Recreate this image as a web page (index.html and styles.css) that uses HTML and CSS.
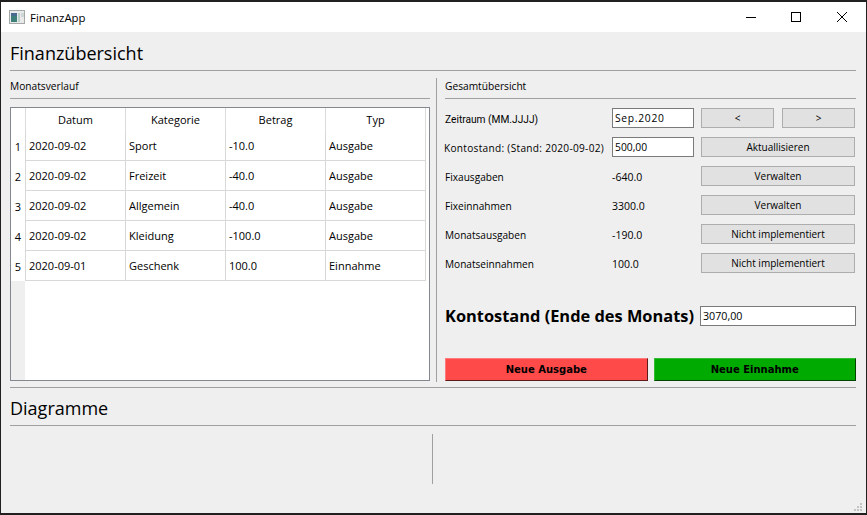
FILE: index.html
```html
<!DOCTYPE html>
<html lang="de">
<head>
<meta charset="utf-8">
<title>FinanzApp</title>
<link rel="stylesheet" href="styles.css">
</head>
<body>
<div class="window">
  <header class="titlebar">
    <svg class="appicon" width="16" height="14" viewBox="0 0 16 14">
      <rect x="0.5" y="0.5" width="15" height="13" fill="#e8eaea" stroke="#a6a8a8"/>
      <rect x="2" y="3" width="6" height="9" fill="#3f7f7a"/>
      <rect x="2" y="3" width="6" height="3" fill="#4a6a92"/>
      <rect x="9" y="3" width="2" height="9" fill="#bcd0cc"/>
      <rect x="12" y="3" width="3" height="4" fill="#cfd6d6"/>
    </svg>
    <span class="apptitle">FinanzApp</span>
    <div class="winbtns">
      <span class="winbtn minbtn"><svg width="10" height="10" viewBox="0 0 10 10"><path d="M0 5.5H10" stroke="#000" fill="none"/></svg></span>
      <span class="winbtn"><svg width="10" height="10" viewBox="0 0 10 10"><rect x="0.5" y="0.5" width="9" height="9" stroke="#000" fill="none"/></svg></span>
      <span class="winbtn"><svg width="10" height="10" viewBox="0 0 10 10"><path d="M0 0L10 10M10 0L0 10" stroke="#000" fill="none"/></svg></span>
    </div>
  </header>
  <main class="content">
    <h1 class="heading">Finanzübersicht</h1>
    <div class="columns">
      <section class="left">
        <h2 class="subheading">Monatsverlauf</h2>
        <div class="tablebox">
          <table class="grid">
            <thead>
              <tr><th class="corner"></th><th>Datum</th><th>Kategorie</th><th>Betrag</th><th>Typ</th></tr>
            </thead>
            <tbody>
              <tr><th class="rownum">1</th><td>2020-09-02</td><td>Sport</td><td>-10.0</td><td>Ausgabe</td></tr>
              <tr><th class="rownum">2</th><td>2020-09-02</td><td>Freizeit</td><td>-40.0</td><td>Ausgabe</td></tr>
              <tr><th class="rownum">3</th><td>2020-09-02</td><td>Allgemein</td><td>-40.0</td><td>Ausgabe</td></tr>
              <tr><th class="rownum">4</th><td>2020-09-02</td><td>Kleidung</td><td>-100.0</td><td>Ausgabe</td></tr>
              <tr><th class="rownum">5</th><td>2020-09-01</td><td>Geschenk</td><td>100.0</td><td>Einnahme</td></tr>
            </tbody>
          </table>
        </div>
      </section>
      <section class="right">
        <h2 class="subheading">Gesamtübersicht</h2>
        <div class="form">
          <span class="lbl zeit">Zeitraum (MM.JJJJ)</span>
          <input class="field spaced" value="Sep.2020">
          <div class="pair"><button class="btn">&lt;</button><button class="btn">&gt;</button></div>

          <span class="lbl wide">Kontostand: (Stand: 2020-09-02)</span>
          <input class="field" value="500,00">
          <button class="btn">Aktuallisieren</button>

          <span class="lbl">Fixausgaben</span>
          <span class="lbl val">-640.0</span>
          <button class="btn">Verwalten</button>

          <span class="lbl">Fixeinnahmen</span>
          <span class="lbl val">3300.0</span>
          <button class="btn">Verwalten</button>

          <span class="lbl">Monatsausgaben</span>
          <span class="lbl val">-190.0</span>
          <button class="btn">Nicht implementiert</button>

          <span class="lbl">Monatseinnahmen</span>
          <span class="lbl val">100.0</span>
          <button class="btn">Nicht implementiert</button>
        </div>
        <div class="balance">
          <span class="balance-label">Kontostand (Ende des Monats)</span>
          <input class="field balance-field" value="3070,00">
        </div>
        <div class="actions">
          <button class="action red">Neue Ausgabe</button>
          <button class="action green">Neue Einnahme</button>
        </div>
      </section>
    </div>
    <h1 class="heading second">Diagramme</h1>
    <div class="charts"><div class="chart-split"></div></div>
    <svg class="grip" width="8" height="8" viewBox="0 0 8 8"><path d="M6 0h2v2H6zM3 3h2v2H3zM6 3h2v2H6zM0 6h2v2H0zM3 6h2v2H3zM6 6h2v2H6z" fill="#c4c4c4"/></svg>
  </main>
</div>
</body>
</html>
```
FILE: styles.css
```css
* { box-sizing: border-box; }
html, body { margin: 0; padding: 0; }
body {
  width: 867px; height: 515px; overflow: hidden;
  background: #202020;
  font-family: "Open Sans", "Noto Sans", sans-serif;
  color: #000;
}
.window {
  margin: 2px 1px 2px 1px;
  height: 511px;
  background: #efefef;
  display: flex; flex-direction: column;
}
.titlebar {
  height: 30px; background: #fff;
  display: flex; align-items: center;
  padding-left: 8px;
  flex: none;
}
.appicon { flex: none; }
.apptitle { font-size: 11.4px; margin-left: 5px; }
.winbtns { margin-left: auto; display: flex; padding-right: 1px; }
.winbtn { width: 46px; height: 30px; display: flex; align-items: center; padding-left: 18px; }
.winbtn.minbtn { padding-left: 19px; }
.content { flex: 1; position: relative; padding: 0 10px 0 9px; display: flex; flex-direction: column; }
.heading {
  margin: 0; font-weight: 400; font-size: 18px; line-height: 24px; height: 39px;
  padding-top: 9px; border-bottom: 1px solid #a0a0a0; flex: none;
}
.heading.second { height: 38px; padding-top: 8px; }
.columns { display: flex; height: 317px; border-bottom: 1px solid #a0a0a0; flex: none; padding-bottom: 5px; }
.left { width: 420px; padding-top: 7px; flex: none; }
.right { margin-left: 6px; flex: 1; border-left: 1px solid #a0a0a0; padding: 0 0 0 8px; margin-top: 7px; display: flex; flex-direction: column; }
.right > * { flex: none; }
.subheading {
  margin: 0; font-weight: 400; font-size: 10.2px; line-height: 14px; height: 21px;
  padding-top: 1px; border-bottom: 1px solid #a0a0a0;
}
.tablebox { margin-top: 8px; height: 274px; border: 1px solid #828790; background: #fff; position: relative; overflow: hidden; }
.tablebox::before { content: ""; position: absolute; left: 0; top: 0; bottom: 0; width: 14px; background: #efefef; }
.grid { border-collapse: separate; border-spacing: 0; table-layout: fixed; width: 415px; position: relative; font-size: 11px; }
.grid th, .grid td { padding: 0; font-weight: 400; }
.grid thead th { height: 23px; width: 100px; text-align: center; border-right: 1px solid #dcdcdc; background: #fff; }
.grid thead th.corner { width: 15px; }
.grid tbody tr { height: 30px; }
.grid td { padding-left: 3px; border-right: 1px solid #d8d8d8; border-bottom: 1px solid #d8d8d8; background: #fff; }
.grid .rownum { background: #fff; text-align: center; border-right: 1px solid #d8d8d8; }
.form {
  display: grid; margin-top: 9px;
  grid-template-columns: 160px 82px 154px; grid-auto-rows: 20px;
  column-gap: 7px; row-gap: 9px; align-items: center;
}
.lbl { font-size: 10.1px; white-space: nowrap; padding-top: 2px; }
.lbl.zeit { font-family: Roboto, sans-serif; font-size: 10.2px; }
.lbl.wide { letter-spacing: 0.3px; margin-left: -1px; }
.lbl.val { font-size: 10.5px; }
.field { height: 20px; border: 1px solid #7a7a7a; background: #fff; font: 10.3px "Open Sans", sans-serif; padding: 0 2px; width: 100%; outline: none; color: #000; }
.field.spaced { letter-spacing: 0.7px; }
.pair { display: flex; gap: 8px; }
.pair .btn { flex: 1; }
.btn { height: 20px; background: #e1e1e1; border: 1px solid #adadad; font: 10px "Open Sans", sans-serif; padding: 0; color: #000; width: 100%; }
.balance { display: flex; align-items: center; height: 20px; margin-top: 33px; }
.balance-label { font: 700 16.4px/20px "Open Sans", sans-serif; white-space: nowrap; width: 255px; flex: none; }
.balance-field { flex: 1; width: auto; font-size: 10.7px; }
.actions { display: flex; gap: 6px; margin-top: 32px; }
.action {
  flex: 1; height: 23px; border: 1px solid; font: 700 10px "DejaVu Sans", sans-serif; color: #000; padding: 0;
}
.red { background: #ff4a4a; border-color: #ff7a7a #5e1b1b #5e1b1b #ff7a7a; }
.green { background: #00aa00; border-color: #33bb33 #004400 #004400 #33bb33; }
.charts { flex: 1; position: relative; padding-top: 8px; }
.chart-split { width: 1px; height: 50px; background: #a0a0a0; margin-left: 422px; }
.grip { position: absolute; right: 4px; bottom: 2px; }
```
